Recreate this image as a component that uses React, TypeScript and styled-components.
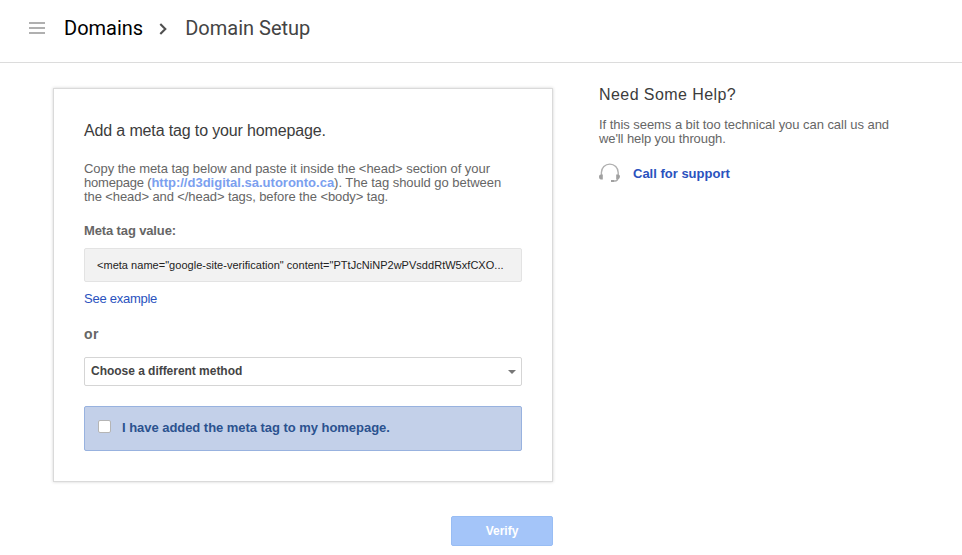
import React from "react";
import styled, { createGlobalStyle } from "styled-components";

const Global = createGlobalStyle`
  *{box-sizing:border-box}
  body{margin:0;background:#fff;font-family:"Liberation Sans",Arial,sans-serif;color:#666;font-size:13px;line-height:14px;overflow:hidden}
  h1,h2,p{margin:0;font-weight:400}
`;
const Header = styled.header`height:63px;border-bottom:1px solid #dcdcdc;display:flex;align-items:flex-start;padding:0 29px;`;
const MenuIcon = styled.svg`margin-top:22px;flex:none;`;
const Crumb = styled.span<{ $current?: boolean }>`font:400 20px/24px Roboto,sans-serif;color:${p => p.$current ? "#444" : "#000"};margin-top:16px;margin-left:${p => p.$current ? "18px" : "19px"};white-space:nowrap;`;
const Chevron = styled.svg`margin:23px 0 0 16px;flex:none;`;
const Main = styled.main`display:flex;align-items:flex-start;padding:25px 0 0 53px;gap:46px;`;
const Column = styled.div`width:500px;display:flex;flex-direction:column;align-items:flex-end;`;
const Card = styled.section`width:500px;height:394px;border:1px solid #dadada;box-shadow:0 0 3px rgba(0,0,0,.18);padding:32px 30px 0;white-space:nowrap;`;
const Title = styled.h1`font-size:16px;line-height:20px;color:#3c3c3c;letter-spacing:-.14px;`;
const Copy = styled.p`margin-top:21px;`;
const Line = styled.span<{ $tracking: number }>`display:block;letter-spacing:${p => p.$tracking}px;`;
const Tight = styled.span`letter-spacing:-.2px;`;
const Link = styled.a<{ $tracking?: number }>`color:#2a52be;text-decoration:none;letter-spacing:${p => p.$tracking ?? 0}px;`;
const SiteLink = styled.b`color:#7ba0ef;letter-spacing:0;`;
const Label = styled.div`font-weight:700;margin-top:20px;letter-spacing:-.13px;`;
const Code = styled.div`margin-top:10px;height:34px;border:1px solid #e3e3e3;border-radius:2px;background:#f2f2f2;color:#222;font-size:11px;line-height:32px;padding-left:12px;letter-spacing:.027px;`;
const Example = styled.div`margin-top:10px;`;
const Or = styled.div`font-weight:700;font-size:14px;margin-top:21px;letter-spacing:.5px;`;
const Select = styled.div`margin-top:16px;height:29px;border:1px solid #d5d5d5;border-radius:2px;color:#444;font-size:12px;font-weight:700;padding:0 5px 2px 6px;display:flex;align-items:center;justify-content:space-between;letter-spacing:-.03px;`;
const Arrow = styled.svg`margin-top:3px;`;
const Confirm = styled.label`margin-top:20px;height:45px;border:1px solid #98b2df;border-radius:2px;background:#c3d0e9;color:#2b528f;font-weight:700;display:flex;align-items:center;padding:0 0 2px 13px;gap:11px;letter-spacing:-.04px;`;
const Box = styled.span`width:13px;height:13px;border:1px solid #b5b5b5;border-radius:2px;background:#fff;margin-top:-2px;`;
const Verify = styled.button`margin-top:34px;width:102px;height:30px;border:1px solid #98bdf4;border-radius:2px;background:#a4c5f9;color:#fff;font:700 12px "Liberation Sans",sans-serif;padding:0;`;
const Help = styled.aside`white-space:nowrap;`;
const HelpTitle = styled.h2`font-size:16px;line-height:14px;color:#3c3c3c;letter-spacing:.43px;`;
const HelpText = styled.p`margin-top:16px;`;
const Support = styled.div`display:flex;align-items:center;gap:12px;margin-top:17px;font-weight:700;`;
const SupportIcon = styled.svg`flex:none;`;

export default function App() {
  return <><Global />
    <Header>
      <MenuIcon width="16" height="12"><path d="M0 1h16M0 6h16M0 11h16" stroke="#b0b0b0" strokeWidth="2" /></MenuIcon>
      <Crumb>Domains</Crumb>
      <Chevron width="8" height="12"><path d="M1.3 1l5 5-5 5" fill="none" stroke="#505050" strokeWidth="2.1" /></Chevron>
      <Crumb $current>Domain Setup</Crumb>
    </Header>
    <Main>
      <Column>
        <Card>
          <Title>Add a meta tag to your homepage.</Title>
          <Copy>
            <Line $tracking={-.055}>Copy the meta tag below and paste it inside the &lt;head&gt; section of your</Line>
            <Line $tracking={-.04}><Tight>homepage (</Tight><SiteLink>http://d3digital.sa.utoronto.ca</SiteLink>). The tag should go between</Line>
            <Line $tracking={-.09}>the &lt;head&gt; and &lt;/head&gt; tags, before the &lt;body&gt; tag.</Line>
          </Copy>
          <Label>Meta tag value:</Label>
          <Code>&lt;meta name="google-site-verification" content="PTtJcNiNP2wPVsddRtW5xfCXO...</Code>
          <Example><Link $tracking={-.26}>See example</Link></Example>
          <Or>or</Or>
          <Select>Choose a different method<Arrow width="8" height="4"><path d="M0 0h8L4 4z" fill="#777" /></Arrow></Select>
          <Confirm><Box />I have added the meta tag to my homepage.</Confirm>
        </Card>
        <Verify>Verify</Verify>
      </Column>
      <Help>
        <HelpTitle>Need Some Help?</HelpTitle>
        <HelpText>
          <Line $tracking={-.05}>If this seems a bit too technical you can call us and</Line>
          <Line $tracking={-.1}>we'll help you through.</Line>
        </HelpText>
        <Support>
          <SupportIcon width="22" height="21" viewBox="0 0 22 21">
            <path d="M2.4 12V9.5a8.4 8.4 0 0 1 16.8 0V12" fill="none" stroke="#b0b0b0" strokeWidth="1.4" />
            <path d="M0 13.5q0-2 2-2h1.8v5H2q-2 0-2-3zM17.2 11.5H19q2 0 2 2t-2 3h-1.8z" fill="#a0a0a0" />
            <path d="M18.7 15.5q0 2.5-2.7 2.5h-2.2" fill="none" stroke="#aaa" strokeWidth="1.3" />
            <path d="M12 17h3v2h-3z" fill="#a0a0a0" />
          </SupportIcon>
          <Link>Call for support</Link>
        </Support>
      </Help>
    </Main>
  </>;
}
